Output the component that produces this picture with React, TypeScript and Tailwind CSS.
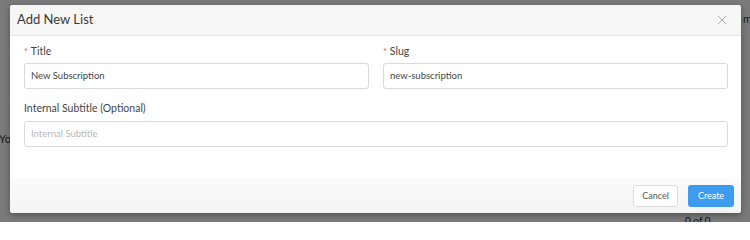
export default function App() {
  return (
    <div className="relative w-[750px] h-[222px] overflow-hidden bg-[#f4f4f4] font-['Lato','Open_Sans',sans-serif]">
      {/* page behind the dialog */}
      <div className="absolute left-[-1px] top-[131px] text-[11px] text-[#333]">Yo</div>
      <div className="absolute left-[743px] top-[11px] text-[11px] text-[#333]">m</div>
      <div className="absolute left-[685px] top-[213px] text-[10px] text-[#222]">0 of 0</div>

      {/* backdrop */}
      <div className="absolute inset-0 bg-black/50" />

      {/* dialog */}
      <div className="absolute left-[10px] top-[5px] w-[731px] h-[208px] flex flex-col rounded-[3px] overflow-hidden bg-white shadow-[0_2px_6px_rgba(0,0,0,0.35)]">
        <div className="h-[31px] shrink-0 flex items-center justify-between pl-[7px] pr-[14px] bg-[#f6f6f6] border-b border-[#e4e4e4]">
          <h2 className="text-[13px] text-[#3a3a3a]">Add New List</h2>
          <svg width="10" height="10" viewBox="0 0 10 10" className="text-[#a0a0a0]">
            <path d="M1 1 9 9M9 1 1 9" stroke="currentColor" strokeWidth="0.9" fill="none" />
          </svg>
        </div>

        <div className="flex-1 pl-[14px] pr-[13px] pt-[8px]">
          <div className="grid grid-cols-2 gap-x-[14px]">
            <div>
              <label className="block text-[10.5px] leading-[14px] text-[#444] mb-[4px]">
                <span className="text-[#e05a4f] mr-[3px] text-[9px]">*</span>Title
              </label>
              <div className="h-[26px] flex items-center px-[6px] rounded-[3px] border border-[#d9d9d9] text-[9.5px] text-[#444]">
                New Subscription
              </div>
            </div>
            <div>
              <label className="block text-[10.5px] leading-[14px] text-[#444] mb-[4px]">
                <span className="text-[#e05a4f] mr-[3px] text-[9px]">*</span>Slug
              </label>
              <div className="h-[26px] flex items-center px-[6px] rounded-[3px] border border-[#d9d9d9] text-[9.5px] text-[#444]">
                new-subscription
              </div>
            </div>
          </div>
          <label className="block mt-[12px] text-[10.5px] leading-[14px] text-[#444] mb-[6px]">
            Internal Subtitle (Optional)
          </label>
          <div className="h-[26px] flex items-center px-[6px] rounded-[3px] border border-[#d9d9d9] text-[9.5px] text-[#b8b8b8]">
            Internal Subtitle
          </div>
        </div>

        <div className="h-[35px] shrink-0 flex items-center justify-end gap-[10px] pr-[7px] bg-gradient-to-b from-[#fbfbfb] to-[#f4f4f4]">
          <button className="w-[45px] h-[22px] rounded-[3px] bg-white border border-[#dcdcdc] text-[9px] text-[#555]">
            Cancel
          </button>
          <button className="w-[46px] h-[22px] rounded-[3px] bg-[#3d9bf0] text-[9px] text-white">
            Create
          </button>
        </div>
      </div>
    </div>
  );
}
